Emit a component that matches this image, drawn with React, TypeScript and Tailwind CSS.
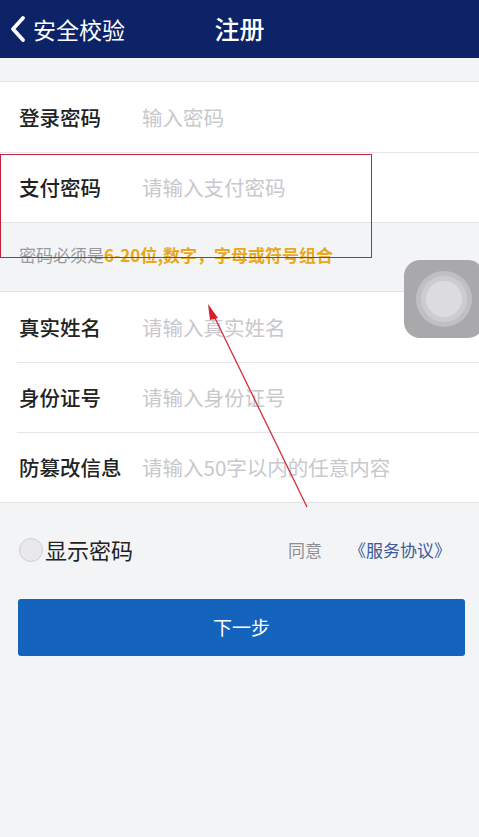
import * as React from "react";

const font = { fontFamily: '"Noto Sans CJK SC", "Noto Sans", sans-serif' };

function Row({ label, placeholder, h = "h-[70px]" }: { label: string; placeholder: string; h?: string }) {
  return (
    <div className={`flex items-center ${h}`}>
      <div className="w-[142px] shrink-0 pl-[19px] text-[20.5px] font-medium text-[#222]">{label}</div>
      <div className="text-[20.5px] text-[#c8c8cd]">{placeholder}</div>
    </div>
  );
}

export default function App() {
  return (
    <div className="relative h-[837px] w-[479px] overflow-hidden bg-[#f3f4f6]" style={font}>
      {/* nav bar */}
      <header className="relative flex h-[58px] items-center bg-[#0c2368] text-white">
        <div className="flex items-center pl-[9px]">
          <svg width="18" height="28" viewBox="0 0 18 28" fill="none">
            <path d="M14 3 L4 14 L14 25" stroke="white" strokeWidth="3.8" strokeLinecap="round" strokeLinejoin="round" />
          </svg>
          <span className="ml-[6px] text-[23px]">安全校验</span>
        </div>
        <div className="absolute left-1/2 -translate-x-1/2 text-[25px] font-medium">注册</div>
      </header>

      <div className="h-[24px] border-b border-[#e2e2e4]" />

      {/* passwords */}
      <section className="bg-white">
        <Row label="登录密码" placeholder="输入密码" />
        <div className="border-t border-[#e6e6e8]" />
        <Row label="支付密码" placeholder="请输入支付密码" h="h-[69px]" />
      </section>

      <div className="flex h-[70px] items-center border-y border-[#e2e2e4] pb-[4px] pl-[19px] text-[17px]">
        <span className="text-[#9a9a9e]">密码必须是</span>
        <span className="font-bold text-[#e8a720]">6-20位,数字，字母或符号组合</span>
      </div>

      {/* identity */}
      <section className="bg-white">
        <Row label="真实姓名" placeholder="请输入真实姓名" />
        <div className="ml-[17px] border-t border-[#e6e6e8]" />
        <Row label="身份证号" placeholder="请输入身份证号" h="h-[69px]" />
        <div className="ml-[17px] border-t border-[#e6e6e8]" />
        <Row label="防篡改信息" placeholder="请输入50字以内的任意内容" h="h-[69px]" />
      </section>

      <div className="flex h-[97px] items-center border-t border-[#e2e2e4] pb-[3px] pl-[19px] pr-[28px]">
        <div className="h-[24px] w-[24px] rounded-full border border-[#cfcfd2] bg-[#e9e9eb]" />
        <span className="ml-[2px] text-[22px] text-[#222]">显示密码</span>
        <span className="ml-auto text-[17px] text-[#8e8e93]">同意</span>
        <span className="ml-[27px] text-[17px] text-[#3a5a9c]">《服务协议》</span>
      </div>

      <div className="pl-[18px] pr-[14px]">
        <button className="flex h-[57px] w-full items-center justify-center rounded-[3px] bg-[#1463bd] text-[19px] text-white">
          下一步
        </button>
      </div>

      {/* annotation: red box */}
      <div className="pointer-events-none absolute left-0 top-[154px] h-[104px] w-[372px] border border-[#c4213f]" />

      {/* annotation: arrow */}
      <svg className="pointer-events-none absolute left-0 top-0" width="479" height="837">
        <line x1="307" y1="507" x2="213" y2="314" stroke="#d0303a" strokeWidth="1.3" />
        <polygon points="208,304 218,318 210,320" fill="#d81e2a" />
      </svg>

      {/* assistive touch */}
      <div className="absolute left-[404px] top-[260px] flex h-[78px] w-[80px] items-center justify-center rounded-[16px] bg-[#a9a9ab]">
        <div className="flex h-[56px] w-[56px] items-center justify-center rounded-full bg-[#c0c0c2]">
          <div className="flex h-[46px] w-[46px] items-center justify-center rounded-full bg-[#cdcdcf]">
            <div className="h-[36px] w-[36px] rounded-full bg-[#dcdcde]" />
          </div>
        </div>
      </div>
    </div>
  );
}
